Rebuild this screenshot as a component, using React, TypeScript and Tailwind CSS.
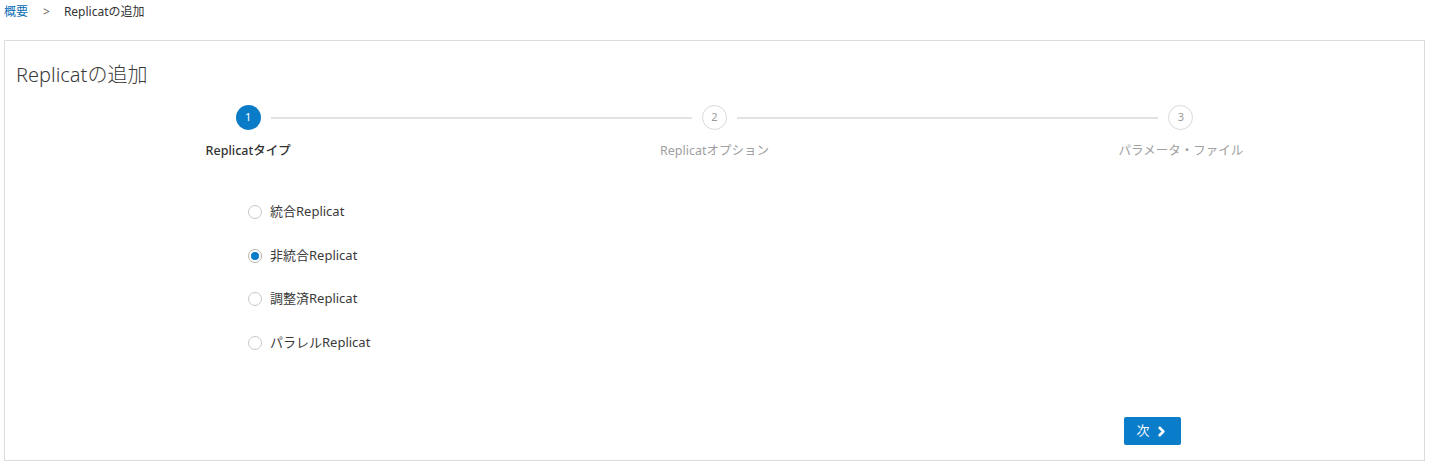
import { ChevronRight } from 'lucide-react';
import { useState } from 'react';

const steps = [
  { n: 1, label: 'Replicatタイプ', active: true },
  { n: 2, label: 'Replicatオプション', active: false },
  { n: 3, label: 'パラメータ・ファイル', active: false },
];

const options = ['統合Replicat', '非統合Replicat', '調整済Replicat', 'パラレルReplicat'];

export default function App() {
  const [selected, setSelected] = useState(1);

  return (
    <div className="w-[1437px] h-[471px] bg-white text-[#333] font-['Noto_Sans','Noto_Sans_CJK_JP',sans-serif]">
      {/* Breadcrumb */}
      <div className="h-6 flex items-center pl-[4px] text-[12px]">
        <span className="text-[#0a6eb4]">概要</span>
        <span className="ml-[15px] text-[#666]">&gt;</span>
        <span className="ml-[14px] text-[#333]">Replicatの追加</span>
      </div>

      {/* Panel */}
      <div className="mt-4 ml-[4px] w-[1421px] h-[421px] border border-[#dcdcdc] flex flex-col">
        <h1 className="pt-5 pl-[11px] text-[20px] leading-7 font-light text-[#3a3a3a]">Replicatの追加</h1>

        {/* Stepper */}
        <div className="mt-4 px-[10px] grid grid-cols-3">
          {steps.map((s, i) => (
            <div key={s.n} className="flex flex-col items-center">
              <div className="w-full flex items-center">
                <div className={`flex-1 h-[2px] mr-[10px] ${i === 0 ? 'bg-transparent' : 'bg-[#e2e2e2]'}`} />
                <div
                  className={`w-[25px] h-[25px] rounded-full flex items-center justify-center text-[11px] ${
                    s.active ? 'bg-[#0a7bc7] text-white' : 'border border-[#d9d9d9] text-[#999]'
                  }`}
                >
                  {s.n}
                </div>
                <div className={`flex-1 h-[2px] ml-[10px] ${i === 2 ? 'bg-transparent' : 'bg-[#e2e2e2]'}`} />
              </div>
              <div
                className={`mt-3 leading-[18px] text-[12.5px] ${s.active ? 'text-[#333] font-medium' : 'text-[#a0a0a0]'}`}
              >
                {s.label}
              </div>
            </div>
          ))}
        </div>

        {/* Radios */}
        <div className="mt-[42px] pl-[243px] flex flex-col gap-[23.5px]">
          {options.map((o, i) => (
            <label key={o} className="h-5 flex items-center cursor-pointer" onClick={() => setSelected(i)}>
              <span
                className={`w-[14px] h-[14px] rounded-full border flex items-center justify-center ${
                  selected === i ? 'border-[#b5b5b5]' : 'border-[#c8c8c8]'
                }`}
              >
                {selected === i && <span className="w-[8px] h-[8px] rounded-full bg-[#0a7bc7]" />}
              </span>
              <span className="ml-[8px] text-[13px] text-[#3a3a3a]">{o}</span>
            </label>
          ))}
        </div>

        {/* Footer */}
        <div className="mt-auto mb-[15px] flex justify-end pr-[243px]">
          <button className="w-[57px] h-[28px] rounded-[2px] bg-[#0a7dca] text-white text-[13px] flex items-center justify-center gap-1">
            <span>次</span>
            <ChevronRight className="w-[15px] h-[15px]" strokeWidth={4} />
          </button>
        </div>
      </div>
    </div>
  );
}
